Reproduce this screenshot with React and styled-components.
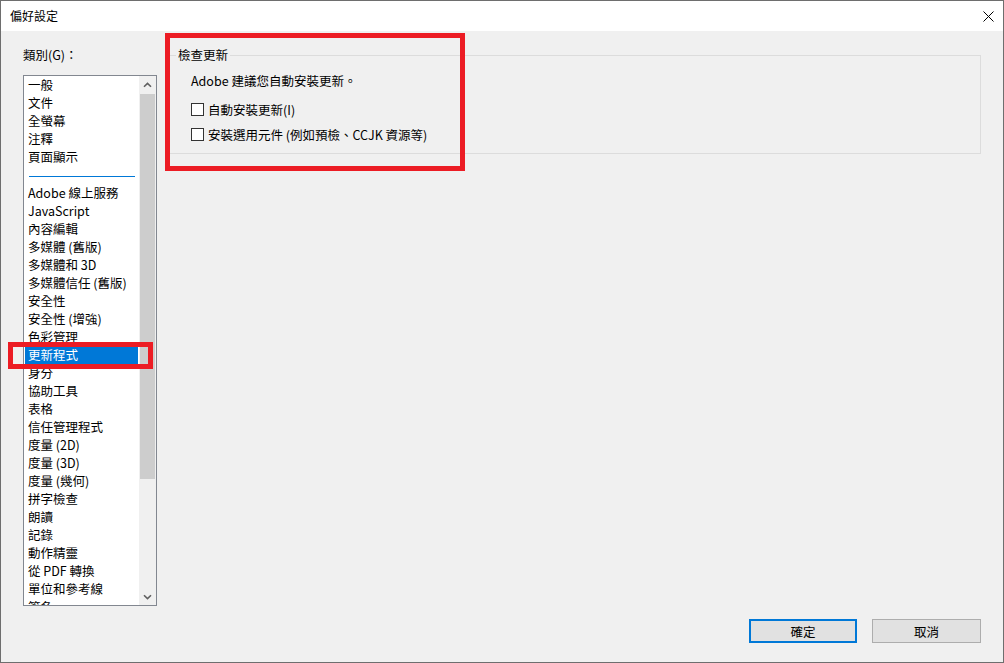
import React from "react";
import styled, { createGlobalStyle } from "styled-components";

const GlobalStyle = createGlobalStyle`
  html, body { margin: 0; padding: 0; background: #f0f0f0; }
  body {
    font-family: "Noto Sans CJK TC", "Noto Sans", sans-serif;
    font-size: 12.5px;
    color: #000;
  }
  *, *::before, *::after { box-sizing: border-box; }
`;

const Window = styled.div`
  position: relative;
  width: 1004px;
  height: 663px;
  border: 1px solid #6e6e6e;
  background: #f0f0f0;
  display: flex;
  flex-direction: column;
  overflow: hidden;
`;

const TitleBar = styled.div`
  flex: none;
  height: 30px;
  background: #fff;
  display: flex;
  align-items: center;
  justify-content: space-between;
  padding-left: 9px;
`;

const TitleText = styled.span`
  font-size: 12px;
  line-height: 16px;
`;

const CloseButton = styled.div`
  width: 30px;
  height: 30px;
  display: flex;
  align-items: center;
  justify-content: center;
`;

const Main = styled.div`
  flex: 1;
  display: flex;
  align-items: flex-start;
  gap: 10px;
  padding: 15px 22px 0 22px;
`;

const LeftCol = styled.div`
  flex: none;
  width: 134px;
  display: flex;
  flex-direction: column;
`;

const CategoryLabel = styled.div`
  height: 18px;
  line-height: 18px;
  margin-bottom: 11px;
`;

const ListBox = styled.div`
  height: 531px;
  display: flex;
  border: 1px solid #828790;
  background: #fff;
`;

const Items = styled.div`
  flex: 1;
  min-width: 0;
  overflow: hidden;
`;

const Item = styled.div`
  height: 18px;
  line-height: 18px;
  margin: 0 1px;
  padding-left: 3px;
  white-space: nowrap;
  background: ${(p) => (p.$selected ? "#0078d7" : "transparent")};
  color: ${(p) => (p.$selected ? "#fff" : "#000")};
`;

const Separator = styled.div`
  height: 18px;
  padding: 10px 4px 0 5px;
`;

const Rule = styled.div`
  height: 1px;
  background: #0078d7;
`;

const Scrollbar = styled.div`
  flex: none;
  width: 17px;
  display: flex;
  flex-direction: column;
  background: #f0f0f0;
`;

const ArrowButton = styled.div`
  flex: none;
  height: 17px;
  display: flex;
  align-items: center;
  justify-content: center;
`;

const Track = styled.div`
  flex: 1;
  padding: 1px 1px 0 1px;
`;

const Thumb = styled.div`
  height: ${(p) => p.$size}px;
  background: #cdcdcd;
`;

const RightCol = styled.div`
  flex: 1;
  min-width: 0;
`;

const GroupBox = styled.fieldset`
  margin: 0;
  padding: 0 0 6px 0;
  min-width: 0;
  border: 1px solid #dcdcdc;
`;

const Legend = styled.legend`
  margin-left: 8px;
  padding: 0 2px;
  line-height: 18px;
`;

const GroupContent = styled.div`
  display: flex;
  flex-direction: column;
  padding: 8px 0 0 23px;
`;

const Note = styled.div`
  line-height: 18px;
  margin-bottom: 7px;
`;

const CheckRow = styled.label`
  height: 25px;
  display: flex;
  align-items: center;
  gap: 4px;
  line-height: 18px;
`;

const CheckBox = styled.span`
  flex: none;
  width: 13px;
  height: 13px;
  border: 1px solid #333;
  background: #fff;
`;

const Footer = styled.div`
  flex: none;
  display: flex;
  justify-content: flex-end;
  gap: 15px;
  padding: 0 22px 19px 22px;
`;

const Button = styled.button`
  width: ${(p) => p.$width}px;
  height: 24px;
  padding: 0;
  margin: 0;
  font-family: inherit;
  font-size: 12.5px;
  color: #000;
  background: #e1e1e1;
  border: ${(p) => (p.$primary ? "2px solid #0078d7" : "1px solid #adadad")};
`;

const Highlight = styled.div`
  position: absolute;
  left: ${(p) => p.$x}px;
  top: ${(p) => p.$y}px;
  width: ${(p) => p.$w}px;
  height: ${(p) => p.$h}px;
  border: 5px solid #ec1c24;
  pointer-events: none;
`;

const categories = [
  "一般",
  "文件",
  "全螢幕",
  "注釋",
  "頁面顯示",
  "---",
  "Adobe 線上服務",
  "JavaScript",
  "內容編輯",
  "多媒體 (舊版)",
  "多媒體和 3D",
  "多媒體信任 (舊版)",
  "安全性",
  "安全性 (增強)",
  "色彩管理",
  "更新程式",
  "身分",
  "協助工具",
  "表格",
  "信任管理程式",
  "度量 (2D)",
  "度量 (3D)",
  "度量 (幾何)",
  "拼字檢查",
  "朗讀",
  "記錄",
  "動作精靈",
  "從 PDF 轉換",
  "單位和參考線",
  "簽名",
  "網際網路",
];

const Chevron = ({ down }) => (
  <svg width="9" height="6" viewBox="0 0 9 6">
    <path
      d={down ? "M1 1.2 L4.5 4.6 L8 1.2" : "M1 4.8 L4.5 1.4 L8 4.8"}
      fill="none"
      stroke="#606060"
      strokeWidth="1.6"
    />
  </svg>
);

export default function App() {
  return (
    <>
      <GlobalStyle />
      <Window>
        <TitleBar>
          <TitleText>偏好設定</TitleText>
          <CloseButton>
            <svg width="11" height="11" viewBox="0 0 11 11">
              <path d="M0.5 0.5 L10.5 10.5 M10.5 0.5 L0.5 10.5" stroke="#000" strokeWidth="1" />
            </svg>
          </CloseButton>
        </TitleBar>
        <Main>
          <LeftCol>
            <CategoryLabel>類別(G)：</CategoryLabel>
            <ListBox>
              <Items>
                {categories.map((c, i) =>
                  c === "---" ? (
                    <Separator key={i}>
                      <Rule />
                    </Separator>
                  ) : (
                    <Item key={i} $selected={c === "更新程式"}>
                      {c}
                    </Item>
                  )
                )}
              </Items>
              <Scrollbar>
                <ArrowButton>
                  <Chevron />
                </ArrowButton>
                <Track>
                  <Thumb $size={385} />
                </Track>
                <ArrowButton>
                  <Chevron down />
                </ArrowButton>
              </Scrollbar>
            </ListBox>
          </LeftCol>
          <RightCol>
            <GroupBox>
              <Legend>檢查更新</Legend>
              <GroupContent>
                <Note>Adobe 建議您自動安裝更新。</Note>
                <CheckRow>
                  <CheckBox />
                  <span>自動安裝更新(I)</span>
                </CheckRow>
                <CheckRow>
                  <CheckBox />
                  <span>安裝選用元件 (例如預檢、CCJK 資源等)</span>
                </CheckRow>
              </GroupContent>
            </GroupBox>
          </RightCol>
        </Main>
        <Footer>
          <Button $primary $width={108}>確定</Button>
          <Button $width={109}>取消</Button>
        </Footer>
        <Highlight $x={7} $y={341} $w={145} $h={27} />
        <Highlight $x={164} $y={32} $w={300} $h={138} />
      </Window>
    </>
  );
}
